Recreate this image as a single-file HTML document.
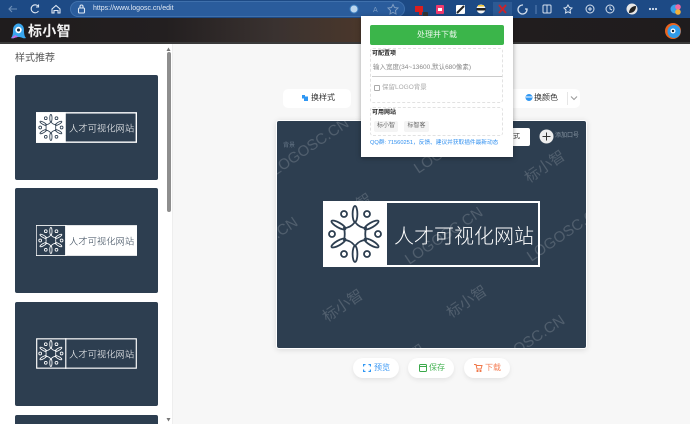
<!DOCTYPE html>
<html><head><meta charset="utf-8"><style>
*{box-sizing:border-box}
html,body{margin:0;padding:0;width:690px;height:424px;overflow:hidden;background:#f7f7f7;font-family:"Liberation Sans","Noto Sans CJK SC",sans-serif}
#w{position:relative;width:690px;height:424px;overflow:hidden}
.a{position:absolute}
.t{position:absolute;white-space:nowrap;line-height:1}
.wm{position:absolute;white-space:nowrap;color:rgba(255,255,255,.17);line-height:1;transform:translate(-50%,-50%) rotate(-34deg)}
.card{position:absolute;left:15px;width:143px;background:#2d3e50;border-radius:2px}
.pill{position:absolute;background:#fff;border-radius:5px}
.rb{position:absolute;top:358px;width:46px;height:20px;background:#fff;border-radius:10px;box-shadow:0 2px 5px rgba(0,0,0,.08);font-size:8px;line-height:20px}
</style></head><body><div id="w">
<svg width="0" height="0" style="position:absolute"><defs>
<symbol id="flake" viewBox="0 0 64 66">
<g fill="none" stroke-width="1.800">
<path d="M32 21C29 25 25 27 21 27C22 31 22 35 21 39C25 39 29 41 32 45C35 41 39 39 43 39C42 35 42 31 43 27C39 27 35 25 32 21Z"/>
<ellipse cx="32" cy="13" rx="2.400" ry="8"/>
<ellipse cx="32" cy="53" rx="2.400" ry="8"/>
<ellipse cx="15.500" cy="24" rx="2.400" ry="8" transform="rotate(-60 15.500 24)"/>
<ellipse cx="48.500" cy="24" rx="2.400" ry="8" transform="rotate(60 48.500 24)"/>
<ellipse cx="15.500" cy="42" rx="2.400" ry="8" transform="rotate(60 15.500 42)"/>
<ellipse cx="48.500" cy="42" rx="2.400" ry="8" transform="rotate(-60 48.500 42)"/>
<circle cx="21" cy="13" r="3"/><circle cx="44" cy="13" r="3"/>
<circle cx="9" cy="33" r="3"/><circle cx="55" cy="33" r="3"/>
<circle cx="21" cy="53" r="3"/><circle cx="44" cy="53" r="3"/>
</g></symbol>
</defs></svg>

<!-- browser bar -->
<div class="a" style="left:0;top:0;width:690px;height:18px;background:#1d4a85"></div>
<div class="a" style="left:70px;top:1px;width:335px;height:16px;border-radius:8px;background:#2a5c9c;border:1px solid #3f70ac"></div>
<svg class="a" style="left:0;top:0" width="90" height="18" fill="none" stroke="#dfe8f3" stroke-width="1.100">
<path d="M17 9H9M12 6L9 9L12 12" stroke="#6f90b8"/>
<path d="M38 6A4 4 0 1 0 38.500 11M38.500 4.500V7H36"/>
<path d="M52 9L56 5.500L60 9V13H58V10.500H54V13H52Z"/>
<rect x="78.500" y="8" width="6" height="5" rx="1"/><path d="M80 8V6.500A1.500 1.500 0 0 1 83 6.500V8"/>
</svg>
<div class="t" style="left:93px;top:5px;font-size:7px;color:#e2eaf5">https://www.logosc.cn/edit</div>
<svg class="a" style="left:345px;top:0" width="345" height="18" fill="none" stroke="#d5e0ee" stroke-width="1">
<circle cx="9" cy="9" r="4" fill="#bcd6ee" stroke="#3d7fc0"/>
<text x="28" y="12" font-size="7" fill="#7d9cc2" stroke="none" font-family="Liberation Sans">A</text>
<path d="M48 4.500L49.500 7.500L53 8L50.500 10.500L51 14L48 12.300L45 14L45.500 10.500L43 8L46.500 7.500Z" stroke="#7d9cc2"/>
<rect x="70" y="6" width="8" height="6" fill="#d91f1f" stroke="none"/><rect x="74" y="11" width="3" height="4" fill="#d91f1f" stroke="none"/>
<rect x="78" y="12" width="5" height="5" rx="1" fill="#333" stroke="none"/>
<rect x="91" y="5" width="8" height="9" rx="1" fill="#ef3a6e" stroke="none"/><rect x="93" y="8" width="4" height="3" fill="#fff" stroke="none"/>
<rect x="111" y="5" width="9" height="9" rx="1" fill="#fff" stroke="none"/><path d="M112 13L119 6" stroke="#222" stroke-width="2"/>
<circle cx="136" cy="9" r="4.500" fill="#f6f6f6" stroke="none"/><rect x="131.500" y="8" width="9" height="2.500" fill="#222" stroke="none"/><path d="M133 5.800H139" stroke="#f3c52c" stroke-width="1.500"/>
<rect x="148" y="2" width="19" height="16" fill="#2d5a94" stroke="none"/>
<path d="M154 5L161 13M161 5L154 13" stroke="#c8242c" stroke-width="2"/>
<path d="M178 5A4.500 4.500 0 1 0 182 9L180 9" stroke-width="1.300"/>
<path d="M191 5V14" stroke="#5a83b5"/>
<rect x="198" y="5" width="8" height="8" rx="1"/><path d="M202 5V13"/>
<path d="M223 5L224.500 7.500L227 8L225 10L225.500 13L223 11.800L220.500 13L221 10L219 8L221.500 7.500Z"/>
<circle cx="245" cy="9" r="4"/><path d="M245 7V11M243 9H247"/>
<circle cx="265" cy="9" r="4"/><path d="M265 6.500V9L267 10"/>
<circle cx="287" cy="9" r="5.500" fill="#e6e6e6" stroke="none"/><path d="M284 13C284 9 287 6 291 6C291 10 289 13 284 13Z" fill="#222" stroke="none"/>
<circle cx="305" cy="9" r=".6"/><circle cx="308" cy="9" r=".6"/><circle cx="311" cy="9" r=".6"/>
<circle cx="330" cy="9" r="4.500" fill="#3aa0e8" stroke="none"/><circle cx="333" cy="7" r="2.800" fill="#ef6aa0" stroke="none"/><circle cx="333" cy="12" r="2.800" fill="#f3b23a" stroke="none"/>
</svg>

<!-- site header -->
<div class="a" style="left:0;top:18px;width:690px;height:26px;background:linear-gradient(90deg,#1f1c1d 0,#231f20 24%,#3a3230 40%,#4a372b 52%,#38302c 62%,#211d1e 75%,#1f1c1d 100%)"></div>
<div class="a" style="left:0;top:42px;width:690px;height:2px;background:#3a3a3a"></div>
<svg class="a" style="left:9px;top:22px" width="18" height="18"><path d="M2 16C4 14 4 10 4 8A5.500 6.500 0 0 1 15 8C15 10 15 14 17 16C14 17 13 15 9.500 15C6 15 5 17 2 16Z" fill="#3aa6ee"/><path d="M2 16C4 15 5 14 6 13L9.500 15C6 15 5 17 2 16Z" fill="#c46ae0"/><circle cx="9.500" cy="8" r="3.200" fill="#fff"/><circle cx="9.500" cy="8" r="1.500" fill="#123"/></svg>
<div class="t" style="left:28px;top:24px;font-size:14px;font-weight:700;color:#f2f2f2;letter-spacing:.3px">标小智</div>
<svg class="a" style="left:664px;top:22px" width="18" height="18"><circle cx="9" cy="9" r="8" fill="#e8641f"/><circle cx="10" cy="9.500" r="6.500" fill="#2f9bea"/><circle cx="9" cy="9" r="2.500" fill="#fff"/><circle cx="9" cy="9" r="1.200" fill="#123"/></svg>

<!-- sidebar -->
<div class="a" style="left:0;top:44px;width:172px;height:380px;background:#fff"></div>
<div class="a" style="left:172px;top:44px;width:1px;height:380px;background:#eee"></div>
<div class="a" style="left:166.500px;top:52px;width:4px;height:160px;background:#8e8e8e;border-radius:2px"></div>
<svg class="a" style="left:165px;top:45px" width="7" height="379"><path d="M1.500 6L3.500 2.500L5.500 6Z" fill="#777"/><path d="M1.500 373L3.500 376.500L5.500 373Z" fill="#777"/></svg>
<div class="t" style="left:15px;top:54px;font-size:10px;color:#555">样式推荐</div>

<div class="card" style="top:75px;height:105px"></div>
<div class="card" style="top:188px;height:105px"></div>
<div class="card" style="top:302px;height:104px"></div>
<div class="card" style="top:415px;height:9px;border-radius:2px 2px 0 0"></div>

<!-- small logos -->
<svg class="a" style="left:36px;top:112px" width="101" height="31" viewBox="0 0 217 66">
<rect x="1.500" y="1.500" width="214" height="63" fill="#2d3e50" stroke="#fff" stroke-width="3"/><rect width="64" height="66" fill="#fff"/>
<use href="#flake" width="64" height="66" stroke="#2d3e50"/>
<text x="71" y="42" font-size="20" fill="#fff" font-family="Noto Sans CJK SC,sans-serif" font-weight="300">人才可视化网站</text></svg>
<svg class="a" style="left:36px;top:225px" width="101" height="31" viewBox="0 0 217 66">
<rect x="64" width="153" height="66" fill="#fff"/><rect width="64" height="66" fill="#2d3e50" stroke="#fff" stroke-width="3"/>
<use href="#flake" width="64" height="66" stroke="#fff"/>
<text x="71" y="42" font-size="20" fill="#2d3e50" font-family="Noto Sans CJK SC,sans-serif" font-weight="300">人才可视化网站</text></svg>
<svg class="a" style="left:36px;top:338px" width="101" height="31" viewBox="0 0 217 66">
<rect x="1.500" y="1.500" width="214" height="63" fill="#2d3e50" stroke="#fff" stroke-width="2.500"/><path d="M64 0V66" stroke="#fff" stroke-width="2.500"/>
<use href="#flake" width="64" height="66" stroke="#fff"/>
<text x="71" y="42" font-size="20" fill="#fff" font-family="Noto Sans CJK SC,sans-serif" font-weight="300">人才可视化网站</text></svg>

<!-- toolbar -->
<div class="pill" style="left:283px;top:89px;width:68px;height:19px"></div>
<svg class="a" style="left:301px;top:94px" width="8" height="8"><path d="M1 1H4V2.500H7V7H3V4.500H1Z" fill="#2f97f3"/></svg>
<div class="t" style="left:311px;top:94px;font-size:8px;color:#333">换样式</div>
<div class="pill" style="left:497px;top:89px;width:83px;height:19px"></div>
<svg class="a" style="left:525px;top:94px" width="8" height="8"><circle cx="4" cy="3.500" r="3.500" fill="#2f97f3"/><path d="M1 3H7" stroke="#fff"/></svg>
<div class="t" style="left:534px;top:94px;font-size:8px;color:#333">换颜色</div>
<div class="a" style="left:567px;top:92px;width:1px;height:13px;background:#e6e6e6"></div>
<svg class="a" style="left:570px;top:95px" width="8" height="6" fill="none" stroke="#999"><path d="M1 1.500L4 4.500L7 1.500"/></svg>

<!-- canvas -->
<div class="a" style="left:276px;top:120px;width:311px;height:229px;background:#2d3e50;border-radius:3px;border:1px solid #fff;box-shadow:0 1px 6px rgba(0,0,0,.12);overflow:hidden">
<div class="wm" style="left:-18px;top:125px;font-size:15px">LOGOSC.CN</div>
<div class="wm" style="left:33px;top:26px;font-size:15px">LOGOSC.CN</div>
<div class="wm" style="left:176px;top:24px;font-size:15px">LOGOSC.CN</div>
<div class="wm" style="left:167px;top:115px;font-size:15px">LOGOSC.CN</div>
<div class="wm" style="left:289px;top:112px;font-size:15px">LOGOSC.CN</div>
<div class="wm" style="left:249px;top:223px;font-size:15px">LOGOSC.CN</div>
<div class="wm" style="left:268px;top:46px;font-size:15px">标小智</div>
<div class="wm" style="left:75px;top:89px;font-size:15px">标小智</div>
<div class="wm" style="left:66px;top:185px;font-size:15px">标小智</div>
<div class="wm" style="left:190px;top:181px;font-size:15px">标小智</div>
<div class="wm" style="left:128px;top:240px;font-size:15px">标小智</div>
<div class="t" style="left:6px;top:22px;font-size:6px;color:#667687">背景</div>
<div class="t" style="left:278px;top:12px;font-size:6px;color:#8996a3">添加口号</div>
</div>
<svg class="a" style="left:323px;top:201px" width="217" height="66" viewBox="0 0 217 66">
<rect x="1" y="1" width="215" height="64" fill="none" stroke="#fff" stroke-width="2"/><rect width="64" height="66" fill="#fff"/>
<use href="#flake" width="64" height="66" stroke="#2d3e50"/>
<text x="71" y="42" font-size="20" fill="#fff" font-family="Noto Sans CJK SC,sans-serif" font-weight="300">人才可视化网站</text></svg>
<div class="a" style="left:510px;top:128px;width:20px;height:18px;background:#fff;border-radius:2px"></div>
<div class="t" style="left:513px;top:133px;font-size:7px;color:#333;width:14px;overflow:hidden">式</div>
<svg class="a" style="left:539px;top:129px" width="15" height="15"><circle cx="7.500" cy="7.500" r="7" fill="#eee"/><path d="M7.500 3.500V11.500M3.500 7.500H11.500" stroke="#333" stroke-width="1"/></svg>

<!-- popup -->
<div class="a" style="left:361px;top:16px;width:152px;height:141px;background:#fff;box-shadow:0 1px 5px rgba(0,0,0,.35)"></div>
<div class="a" style="left:370px;top:25px;width:134px;height:20px;background:#3bb54a;border-radius:2px;color:#e8f7ea;font-size:8px;line-height:20px;text-align:center">处理并下载</div>
<div class="a" style="left:370px;top:48px;width:133px;height:55px;border:1px dashed #e2e2e2;border-radius:3px"></div>
<div class="t" style="left:372px;top:51px;font-size:6px;font-weight:700;color:#222">可配置项</div>
<div class="t" style="left:373px;top:65px;font-size:6.500px;color:#888">输入宽度(34~13600,默认680像素)</div>
<div class="a" style="left:372px;top:76px;width:130px;height:1px;background:#ccc"></div>
<div class="a" style="left:374px;top:85px;width:6px;height:6px;border:1px solid #aaa;border-radius:1px"></div>
<div class="t" style="left:382px;top:85px;font-size:6.500px;color:#aaa">保留LOGO背景</div>
<div class="a" style="left:370px;top:107px;width:133px;height:29px;border:1px dashed #e2e2e2;border-radius:3px"></div>
<div class="t" style="left:372px;top:110px;font-size:6px;font-weight:700;color:#222">可用网站</div>
<div class="a" style="left:374px;top:121px;width:24px;height:11px;background:#f4f4f4;border-radius:2px;font-size:6px;line-height:11px;text-align:center;color:#666">标小智</div>
<div class="a" style="left:404px;top:121px;width:25px;height:11px;background:#f4f4f4;border-radius:2px;font-size:6px;line-height:11px;text-align:center;color:#666">标智客</div>
<div class="t" style="left:370px;top:141px;font-size:5.700px;color:#2f8ff0;width:130px">QQ群: 71560251，反馈、建议并获取插件最新动态</div>

<!-- bottom buttons -->
<div class="rb" style="left:353px;color:#3f9bf5;padding-left:21px">预览</div>
<svg class="a" style="left:363px;top:364px" width="8" height="8" fill="none" stroke="#2f97f3" stroke-width="1.300"><path d="M0.500 2.500V.5H2.500M5.500 .5H7.500V2.500M7.500 5.500V7.500H5.500M2.500 7.500H.5V5.500"/></svg>
<div class="rb" style="left:408px;color:#46b354;padding-left:21px">保存</div>
<svg class="a" style="left:419px;top:364px" width="8" height="8" fill="none" stroke="#3aa84a" stroke-width="1"><rect x=".5" y=".5" width="7" height="7" rx="1"/><path d="M.5 2.500H7.500"/></svg>
<div class="rb" style="left:464px;color:#f5825a;padding-left:21px">下载</div>
<svg class="a" style="left:474px;top:364px" width="9" height="8" fill="none" stroke="#f0784a" stroke-width="1"><path d="M0 .5H2L3 5H7L8 1.500H2.500"/><circle cx="3.500" cy="7" r=".6"/><circle cx="6.500" cy="7" r=".6"/></svg>
</div></body></html>
